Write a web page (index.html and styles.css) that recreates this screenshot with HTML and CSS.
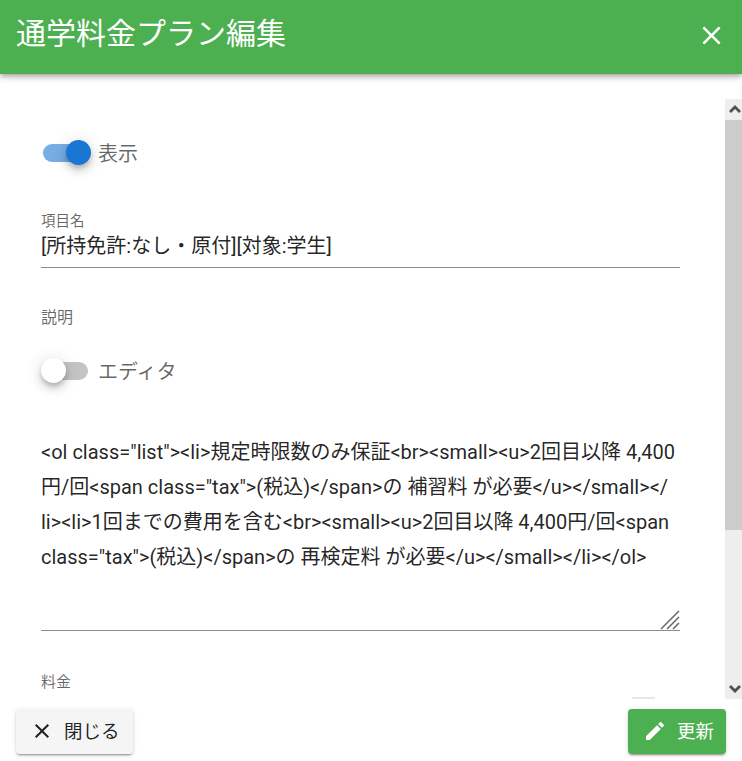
FILE: index.html
```html
<!DOCTYPE html>
<html>
<head>
    <meta charset="utf-8" />
    <title>通学料金プラン編集</title>
    <link rel="stylesheet" href="styles.css">
</head>
<body>
    <div class="dialog">
        <header class="toolbar">
            <div class="toolbarTitle">通学料金プラン編集</div>
            <svg class="closeIcon" viewBox="0 0 24 24"><path d="M19 6.41 17.59 5 12 10.59 6.41 5 5 6.41 10.59 12 5 17.59 6.41 19 12 13.41 17.59 19 19 17.59 13.41 12z"/></svg>
        </header>
        <div class="body">
            <div class="content">
                <label class="switchRow rowShow">
                    <span class="switch on"><span class="track"></span><span class="thumb"></span></span>
                    <span class="switchLabel">表示</span>
                </label>
                <div class="field fieldName">
                    <div class="smallLabel">項目名</div>
                    <div class="fieldValue">[所持免許:なし・原付][対象:学生]</div>
                </div>
                <div class="sectionLabel">説明</div>
                <label class="switchRow rowEditor">
                    <span class="switch"><span class="track"></span><span class="thumb"></span></span>
                    <span class="switchLabel">エディタ</span>
                </label>
                <div class="textareaBox">
                    <div class="textareaText">&lt;ol class="list"&gt;&lt;li&gt;規定時限数のみ保証&lt;br&gt;&lt;small&gt;&lt;u&gt;2回目以降 4,400<br>円/回&lt;span class="tax"&gt;(税込)&lt;/span&gt;の 補習料 が必要&lt;/u&gt;&lt;/small&gt;&lt;/<br>li&gt;&lt;li&gt;1回までの費用を含む&lt;br&gt;&lt;small&gt;&lt;u&gt;2回目以降 4,400円/回&lt;span<br>class="tax"&gt;(税込)&lt;/span&gt;の 再検定料 が必要&lt;/u&gt;&lt;/small&gt;&lt;/li&gt;&lt;/ol&gt;</div>
                    <svg class="resizer" viewBox="0 0 20 20"><path d="M1 19 19 1M7 19 19 7M13 19l6-6" /></svg>
                </div>
                <div class="sectionLabel priceLabel">料金</div>
                <div class="spinner"></div>
            </div>
            <div class="scrollbar">
                <div class="scrollBtn"><svg class="chevron" viewBox="0 0 12 8"><path d="M0 6 6 0l6 6-2 2-4-4-4 4z"/></svg></div>
                <div class="scrollThumb"></div>
                <div class="scrollBtn scrollBtnDown"><svg class="chevron" viewBox="0 0 12 8"><path d="M0 2 6 8l6-6-2-2-4 4-4-4z"/></svg></div>
            </div>
        </div>
        <footer class="actions">
            <button class="btn btnClose">
                <svg class="btnIcon" viewBox="0 0 24 24"><path d="M19 6.41 17.59 5 12 10.59 6.41 5 5 6.41 10.59 12 5 17.59 6.41 19 12 13.41 17.59 19 19 17.59 13.41 12z"/></svg>
                <span class="btnText">閉じる</span>
            </button>
            <button class="btn btnSave">
                <svg class="btnIcon" viewBox="0 0 24 24"><path d="M3 17.25V21h3.75L17.81 9.94l-3.75-3.75L3 17.25zM20.71 7.04a1 1 0 0 0 0-1.41l-2.34-2.34a1 1 0 0 0-1.41 0l-1.83 1.83 3.75 3.75 1.83-1.83z"/></svg>
                <span class="btnText">更新</span>
            </button>
        </footer>
    </div>
</body>
</html>
```

FILE: styles.css
```css
* {
    margin: 0;
    padding: 0;
    box-sizing: border-box;
}

html, body {
    height: 100%;
    overflow: hidden;
}

body {
    background: #fff;
    font-family: Roboto, "Noto Sans CJK JP", sans-serif;
    color: rgba(0, 0, 0, 0.87);
}

.dialog {
    height: 761px;
    display: flex;
    flex-direction: column;
}

.toolbar {
    flex: 0 0 74px;
    height: 74px;
    display: flex;
    align-items: center;
    justify-content: space-between;
    padding: 0 16px;
    background: #4caf50;
    color: #fff;
    box-shadow: 0 2px 4px -1px rgba(0, 0, 0, .2), 0 4px 5px 0 rgba(0, 0, 0, .14), 0 1px 10px 0 rgba(0, 0, 0, .12);
    position: relative;
    z-index: 2;
}

.toolbarTitle {
    font-size: 30px;
    line-height: 36px;
    margin-bottom: 6px;
}

.closeIcon {
    width: 31px;
    height: 31px;
    fill: #fff;
    margin-top: -4px;
    margin-right: -1px;
}

.body {
    flex: 0 0 600px;
    height: 600px;
    margin-top: 25px;
    display: flex;
}

.content {
    flex: 1;
    padding-left: 41px;
    overflow: hidden;
}

.scrollbar {
    flex: 0 0 17px;
    display: flex;
    flex-direction: column;
    background: #eee;
}

.scrollBtn {
    flex: 0 0 21px;
    padding: 6px 0 0 4px;
    line-height: 0;
}

.scrollBtnDown {
    margin-top: auto;
    padding-top: 7px;
}

.chevron {
    width: 12px;
    height: 8px;
    fill: #505050;
}

.scrollThumb {
    height: 410px;
    background: #ccc;
}

.switchRow {
    display: flex;
    align-items: center;
    height: 26px;
}

.rowShow {
    margin-top: 41px;
}

.rowEditor {
    margin-top: 29px;
}

.switch {
    position: relative;
    width: 47px;
    height: 26px;
    display: block;
}

.track {
    position: absolute;
    left: 2px;
    top: 4px;
    width: 45px;
    height: 18px;
    border-radius: 9px;
    background: #c4c4c4;
}

.thumb {
    position: absolute;
    left: 0;
    top: 0;
    width: 25px;
    height: 25px;
    border-radius: 50%;
    background: #fff;
    box-shadow: 0 3px 5px -1px rgba(0, 0, 0, .2), 0 6px 10px 0 rgba(0, 0, 0, .14), 0 1px 18px 0 rgba(0, 0, 0, .12);
}

.switch.on .track {
    background: #1976d2;
    opacity: .6;
}

.switch.on .thumb {
    left: 25px;
    background: #1976d2;
}

.switchLabel {
    margin: 0 0 2px 10px;
    font-size: 20px;
    color: rgba(0, 0, 0, 0.6);
}

.field {
    border-bottom: 1px solid #8c8c8c;
    width: 639px;
}

.fieldName {
    margin-top: 46px;
    height: 56px;
}

.smallLabel {
    font-size: 14.5px;
    line-height: 20px;
    color: rgba(0, 0, 0, 0.6);
}

.fieldValue {
    font-size: 20px;
    line-height: 28px;
}

.sectionLabel {
    margin-top: 39px;
    font-size: 16px;
    line-height: 22px;
    color: rgba(0, 0, 0, 0.6);
}

.textareaBox {
    position: relative;
    width: 639px;
    height: 214px;
    margin-top: 33px;
    padding-top: 18px;
    border-bottom: 1px solid #8c8c8c;
}

.textareaText {
    font-size: 20px;
    line-height: 35px;
    white-space: nowrap;
}

.resizer {
    position: absolute;
    right: 0;
    bottom: 0;
    width: 20px;
    height: 20px;
    fill: none;
    stroke: #666;
    stroke-width: 1.5;
}

.priceLabel {
    margin-top: 40px;
    font-size: 15px;
}

.spinner {
    width: 23px;
    height: 2px;
    margin: 4px 0 0 591px;
    background: #e6e6ee;
}

.actions {
    flex: 1;
    display: flex;
    justify-content: space-between;
    align-items: flex-start;
    padding: 10px 16px 0;
}

.btn {
    display: flex;
    align-items: center;
    height: 45px;
    padding-bottom: 1px;
    border: none;
    border-radius: 4px;
    font-family: inherit;
    font-size: 18.5px;
    box-shadow: 0 3px 1px -2px rgba(0, 0, 0, .2), 0 2px 2px 0 rgba(0, 0, 0, .14), 0 1px 5px 0 rgba(0, 0, 0, .12);
}

.btnIcon {
    width: 24px;
    height: 24px;
    fill: currentColor;
    margin-right: 10px;
}

.btnText {
    margin-bottom: 3px;
}

.btnClose {
    width: 117px;
    padding-left: 14px;
    background: #f5f5f5;
    color: rgba(0, 0, 0, 0.87);
}

.btnSave {
    width: 98px;
    padding-left: 15px;
    background: #4caf50;
    color: #fff;
}
```
